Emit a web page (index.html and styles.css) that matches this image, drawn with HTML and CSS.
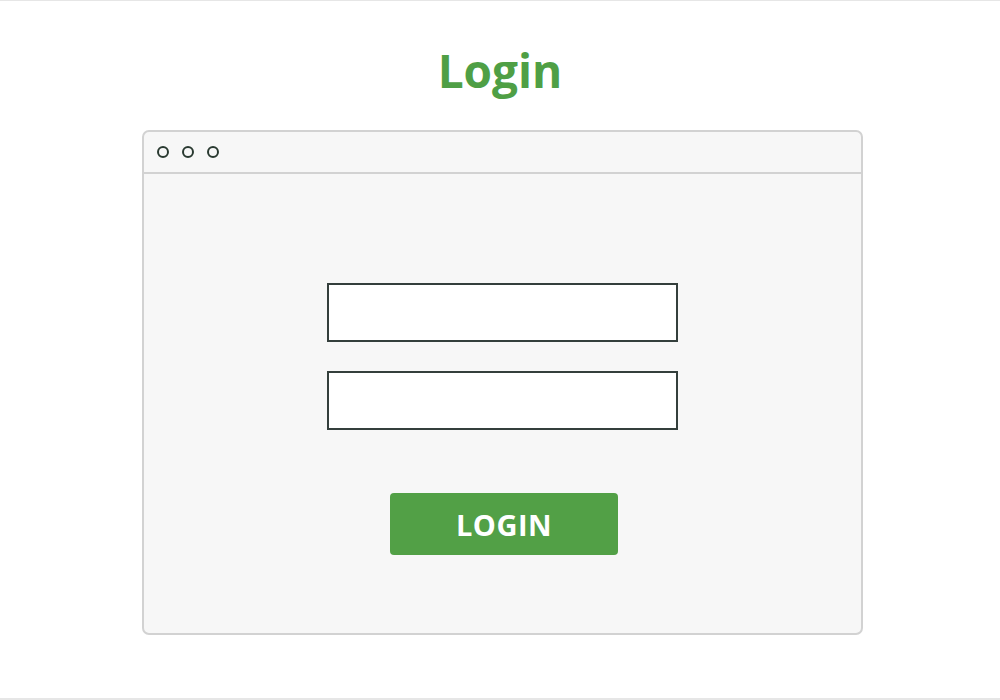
FILE: index.html
```html
<!DOCTYPE html>
<html>
<head>
<meta charset="utf-8">
<link rel="stylesheet" href="styles.css">
</head>
<body>
<div class="page">
  <h1 class="title">Login</h1>
  <div class="window">
    <div class="titlebar">
      <span class="dot"></span><span class="dot"></span><span class="dot"></span>
    </div>
    <div class="content">
      <div class="field"></div>
      <div class="field"></div>
      <div class="button">LOGIN</div>
    </div>
  </div>
</div>
</body>
</html>
```
FILE: styles.css
```css
html, body {
  margin: 0;
  padding: 0;
  background: #ffffff;
}
.page {
  width: 1000px;
  height: 700px;
  box-sizing: border-box;
  border-top: 1px solid #e6e6e6;
  border-bottom: 2px solid #e6e6e6;
  display: flex;
  flex-direction: column;
  align-items: center;
  font-family: "Open Sans", sans-serif;
}
.title {
  margin: 39px 0 0 0;
  height: 90px;
  font-size: 46px;
  line-height: 60px;
  font-weight: 700;
  color: #4f9f45;
}
.window {
  width: 721px;
  height: 505px;
  margin-left: 4px;
  box-sizing: border-box;
  border: 2px solid #d2d2d2;
  border-radius: 7px;
  background: #f7f7f7;
  display: flex;
  flex-direction: column;
}
.titlebar {
  height: 42px;
  box-sizing: border-box;
  border-bottom: 2px solid #d2d2d2;
  display: flex;
  align-items: center;
  gap: 13px;
  padding-left: 13px;
}
.dot {
  width: 12px;
  height: 12px;
  box-sizing: border-box;
  border: 2.5px solid #2a3a31;
  border-radius: 50%;
}
.content {
  flex: 1;
  display: flex;
  flex-direction: column;
  align-items: center;
  padding-top: 109px;
}
.field {
  width: 351px;
  height: 59px;
  box-sizing: border-box;
  border: 2px solid #343f3c;
  background: #ffffff;
  margin-bottom: 29px;
}
.button {
  margin-top: 34px;
  margin-left: 4px;
  width: 228px;
  height: 62px;
  border-radius: 4px;
  background: #52a046;
  color: #ffffff;
  font-size: 29px;
  font-weight: 700;
  display: flex;
  align-items: center;
  justify-content: center;
  letter-spacing: 0.5px;
}
```
